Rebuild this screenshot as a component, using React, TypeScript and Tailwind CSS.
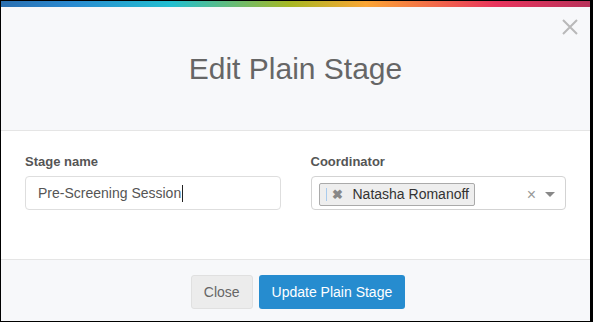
const font = { fontFamily: '"Liberation Sans", Arial, sans-serif' };

function CloseIcon() {
  return (
    <svg viewBox="0 0 16 16" className="h-[16px] w-[16px]" fill="none" stroke="#b9b9b9" strokeWidth="2">
      <path d="M1 1l14 14M15 1L1 15" />
    </svg>
  );
}

export default function App() {
  return (
    <div className="flex h-[322px] w-[593px] flex-col bg-black pt-px pb-px pl-px pr-[3px]" style={font}>
      <div className="h-[6px] bg-[linear-gradient(90deg,#2a6fb0_0%,#2a8ad0_12%,#22bfd0_29%,#a6b823_49%,#fba534_62%,#e8345c_84%,#b8325a_100%)]" />

      {/* header */}
      <div className="relative flex h-[124px] items-center justify-center border-b border-[#e5e5e5] bg-[#f7f8fa]">
        <h1 className="text-[30px] leading-none text-[#666]">Edit Plain Stage</h1>
        <button type="button" aria-label="Close" className="absolute right-[12px] top-[12px]">
          <CloseIcon />
        </button>
      </div>

      {/* body */}
      <div className="grid h-[128px] grid-cols-2 gap-[30px] bg-white px-[24px] pt-[22px]">
        <div>
          <label className="mb-[5px] block text-[13px] font-bold leading-[18px] text-[#555]">Stage name</label>
          <div className="flex h-[34px] items-center rounded-[4px] border border-[#dedede] px-[12px] text-[14px] text-[#555]">
            Pre-Screening Session
            <span className="ml-px inline-block h-[17px] w-px bg-[#222]" />
          </div>
        </div>
        <div>
          <label className="mb-[5px] block text-[13px] font-bold leading-[18px] text-[#555]">Coordinator</label>
          <div className="flex h-[34px] items-center rounded-[4px] border border-[#d3d3d3] pl-[7px] pr-[10px] pt-[3px]">
            <div className="flex h-[23px] items-center rounded-[2px] border border-[#aaa] bg-[#eee] pl-[6px] pr-[5px] text-[14px] text-[#333]">
              <span className="mr-[5px] h-[13px] w-px bg-[#a9cbed]" />
              <span className="mr-[10px] text-[13px] font-bold leading-none text-[#888]">✖</span>
              Natasha Romanoff
            </div>
            <div className="ml-auto flex items-center gap-[9px] text-[#999]">
              <span className="text-[16px] leading-none">×</span>
              <svg viewBox="0 0 10 5" className="h-[5px] w-[10px]"><path d="M0 0h10L5 5z" fill="#888" /></svg>
            </div>
          </div>
        </div>
      </div>

      {/* footer */}
      <div className="flex flex-1 justify-center gap-[6px] border-t border-[#e5e5e5] bg-[#f7f8fa] pl-[5px] pt-[15px]">
        <button type="button" className="h-[34px] rounded-[3px] border border-[#e0e0e0] bg-[#ececec] px-[12px] text-[14px] text-[#666]">
          Close
        </button>
        <button type="button" className="h-[34px] rounded-[3px] bg-[#268ccf] px-[13px] text-[14px] text-white">
          Update Plain Stage
        </button>
      </div>
    </div>
  );
}
